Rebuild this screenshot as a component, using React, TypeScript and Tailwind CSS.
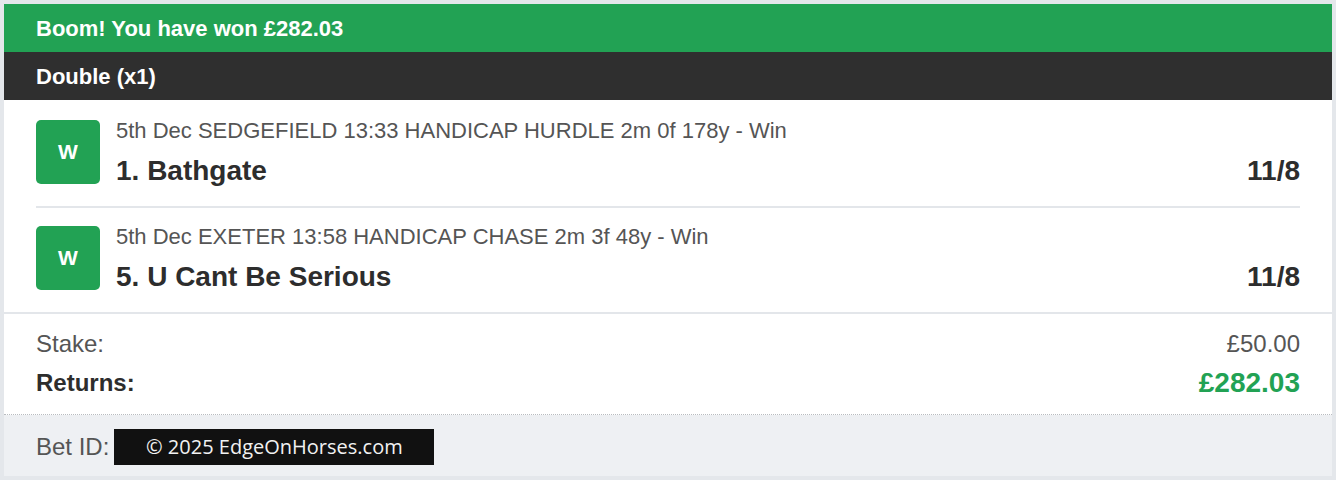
import React from "react";

const legs = [
  {
    result: "W",
    meta: "5th Dec SEDGEFIELD 13:33 HANDICAP HURDLE 2m 0f 178y - Win",
    name: "1. Bathgate",
    odds: "11/8",
  },
  {
    result: "W",
    meta: "5th Dec EXETER 13:58 HANDICAP CHASE 2m 3f 48y - Win",
    name: "5. U Cant Be Serious",
    odds: "11/8",
  },
];

function LegRow({ leg, first }: { leg: (typeof legs)[number]; first: boolean }) {
  return (
    <div
      className={
        first
          ? "flex items-start gap-4 pb-[22px] border-b-2 border-[#e3e6ea]"
          : "flex items-start gap-4 pt-[18px] pb-[22px]"
      }
    >
      <div className="flex h-16 w-16 shrink-0 items-center justify-center rounded-[5px] bg-[#22a254] text-[21px] font-bold text-white">
        {leg.result}
      </div>
      <div className="flex-1">
        <div className="text-[22px] leading-[22px] text-[#555]">{leg.meta}</div>
        <div className="mt-4 flex items-center justify-between text-[28px] leading-[26px] font-bold text-[#2d2d2d]">
          <span>{leg.name}</span>
          <span>{leg.odds}</span>
        </div>
      </div>
    </div>
  );
}

export default function App() {
  return (
    <div
      className="min-h-[480px] bg-[#e4e7eb] p-1"
      style={{ fontFamily: '"Liberation Sans", Arial, sans-serif' }}
    >
      <div className="bg-white">
        {/* Win banner */}
        <div className="flex h-12 items-center bg-[#22a254] px-8 text-[22px] font-bold text-white">
          Boom! You have won £282.03
        </div>

        {/* Bet type */}
        <div className="flex h-12 items-center bg-[#2f2f2f] px-8 text-[22px] font-bold text-white">
          Double (x1)
        </div>

        {/* Legs */}
        <div className="border-b-2 border-[#e3e6ea] px-8 pt-5">
          {legs.map((leg, i) => (
            <LegRow key={i} leg={leg} first={i === 0} />
          ))}
        </div>

        {/* Stake / returns */}
        <div className="border-b border-dotted border-[#b9bcc0] px-8 pt-4 pb-[14px]">
          <div className="flex items-center justify-between text-[24px] leading-[28px] text-[#555]">
            <span>Stake:</span>
            <span>£50.00</span>
          </div>
          <div className="mt-2 flex h-[34px] items-center justify-between">
            <span className="text-[24px] font-bold text-[#2d2d2d]">Returns:</span>
            <span className="text-[28px] font-bold text-[#22a254]">£282.03</span>
          </div>
        </div>

        {/* Bet ID */}
        <div className="flex items-center gap-[5px] bg-[#eef0f3] px-8 pt-[14px] pb-[11px]">
          <span className="text-[24px] leading-[28px] text-[#555]">Bet ID:</span>
          <div
            className="flex h-9 w-[320px] items-center justify-center bg-[#111] text-[20px] text-[#f2f2f2]"
            style={{ fontFamily: '"Open Sans", "Noto Sans", sans-serif' }}
          >
            © 2025 EdgeOnHorses.com
          </div>
        </div>
      </div>
    </div>
  );
}
